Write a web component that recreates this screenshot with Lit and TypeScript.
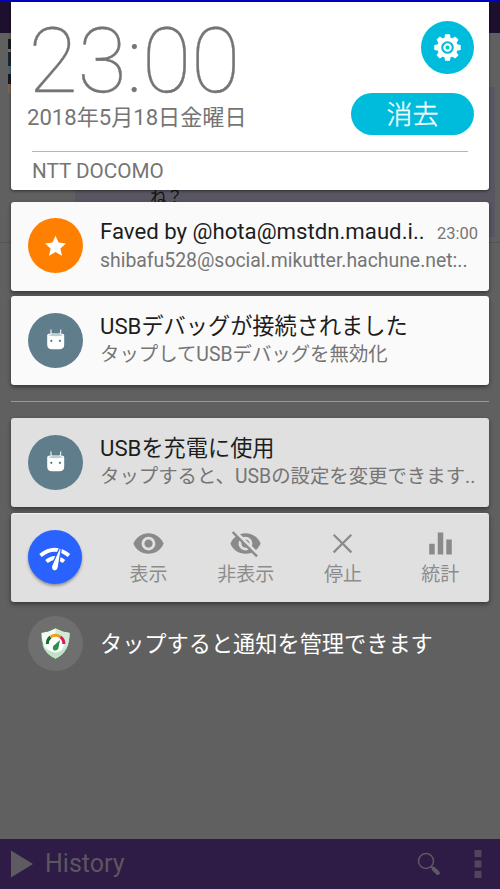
import { LitElement, html, css, svg, nothing } from "lit";
import { customElement, property } from "lit/decorators.js";

const star = svg`<svg width="55" height="55" viewBox="0.500 0.500 55 55"><path fill="#fff" d="M28 18.200l3.100 6.900 7.300.8-5.500 5 1.600 7.400-6.500-3.800-6.500 3.800 1.600-7.400-5.500-5 7.300-.8z"/></svg>`;

const android = svg`<svg width="55" height="55" viewBox="0 0 55 55">
  <path d="M22.800 16.500l.5 5M32.800 16.500l-.5 5" stroke="#dfe8ea" stroke-width="1.300"/>
  <path fill="#fff" d="M19.200 22.500q0-2 3-2h11q3 0 3 2v9q0 4.800-4.800 4.800h-7.400q-4.800 0-4.800-4.800z"/>
  <path fill="#b9cfd4" d="M19.800 22.300q8-3.500 16 0-8 1.800-16 0z"/>
  <circle cx="23.300" cy="27.800" r="1.100" fill="#546e7a"/><circle cx="31.900" cy="27.800" r="1.100" fill="#546e7a"/></svg>`;

const eyePath = "M12 4.500C7 4.500 2.730 7.610 1 12c1.730 4.390 6 7.500 11 7.500s9.270-3.110 11-7.500c-1.730-4.390-6-7.500-11-7.500zM12 17c-2.760 0-5-2.240-5-5s2.240-5 5-5 5 2.240 5 5-2.240 5-5 5zm0-8c-1.660 0-3 1.340-3 3s1.340 3 3 3 3-1.340 3-3-1.340-3-3-3z";
const eyeOffPath = "M12 7c2.760 0 5 2.240 5 5 0 .650-.130 1.260-.360 1.830l2.920 2.920c1.510-1.260 2.700-2.890 3.430-4.750-1.730-4.390-6-7.500-11-7.500-1.400 0-2.740.250-3.980.700l2.160 2.160C10.740 7.130 11.350 7 12 7zM2 4.270l2.280 2.280.46.46C3.080 8.300 1.780 10.020 1 12c1.730 4.390 6 7.500 11 7.500 1.550 0 3.030-.300 4.380-.840l.420.420L19.730 22 21 20.730 3.270 3 2 4.270zM7.530 9.800l1.550 1.550c-.050.210-.080.430-.080.650 0 1.660 1.340 3 3 3 .220 0 .440-.030.650-.080l1.550 1.550c-.670.330-1.410.530-2.200.530-2.760 0-5-2.240-5-5 0-.790.200-1.530.530-2.200zm4.310-.780l3.150 3.150.020-.160c0-1.660-1.340-3-3-3l-.170.010z";
const actions = [
  { label: "表示", path: eyePath },
  { label: "非表示", path: eyeOffPath },
  { label: "停止", path: "M19 6.140L17.860 5 12 10.860 6.140 5 5 6.140 10.860 12 5 17.860 6.140 19 12 13.140 17.860 19 19 17.860 13.140 12z" },
  { label: "統計", path: "M3.800 12.200h4V20h-4zM10 4h4v16h-4zM16.200 9h4V20h-4z" },
];

@customElement("notice-card")
class NoticeCard extends LitElement {
  @property() heading = "";
  @property() detail = "";
  @property() time = "";
  @property() tone = "";
  @property({ attribute: false }) icon: unknown = nothing;

  static styles = css`
    :host { display: block; }
    .card { display: flex; box-sizing: border-box; height: 89px; padding: 0 11px 0 17px; border-radius: 3px; background: #fafafa; box-shadow: 0 2px 4px rgba(0,0,0,.45); }
    .dim { background: #e0e0e0; }
    .badge { flex: none; width: 55px; height: 55px; margin-top: 16.500px; border-radius: 50%; background: #607d8b; }
    .orange { background: #ff8000; }
    .badge svg { display: block; }
    .copy { flex: 1; min-width: 0; margin-left: 17px; padding-top: 15px; white-space: nowrap; }
    .latin { padding-top: 14px; }
    .top { display: flex; justify-content: space-between; align-items: baseline; height: 30px; line-height: 30px; }
    .title { font-size: 22.200px; color: #1d1d1d; }
    .time { font-size: 16.500px; color: #757575; }
    .detail { height: 26px; line-height: 28px; font-size: 19.400px; color: #757575; }
    .latin .detail { line-height: 29px; }
  `;

  render() {
    return html`<section class="card ${this.tone}">
      <div class="badge ${this.time ? "orange" : ""}">${this.icon}</div>
      <div class="copy ${this.time ? "latin" : ""}">
        <div class="top"><span class="title">${this.heading}</span><span class="time">${this.time}</span></div>
        <div class="detail">${this.detail}</div>
      </div>
    </section>`;
  }
}

@customElement("app-root")
class AppRoot extends LitElement {
  static styles = css`
    :host { display: block; position: relative; width: 500px; height: 889px; overflow: hidden; background: #606060; font-family: Roboto, "Noto Sans CJK JP", sans-serif; }
    .behind { display: flex; flex-direction: column; height: 889px; }
    .status { height: 33px; background: #1d102e; flex: none; }
    .feed { flex: 1; position: relative; }
    .avatar { position: absolute; left: 8px; top: 6px; width: 8px; height: 54px; background: linear-gradient(#17191d 0 18%, #7a7064 18% 24%, #1b2630 24% 50%, #506472 50% 64%, #17191f 64% 84%, #7e6557 84%); }
    .post { position: absolute; left: 75px; top: 54px; width: 420px; height: 150px; background: #5a5661; box-sizing: border-box; padding: 98px 0 0 75px; font-size: 16.500px; line-height: 26px; color: #111; }
    .rule { position: absolute; left: 0; right: 0; top: 209px; height: 1px; background: #545454; }
    .bar { flex: none; display: flex; align-items: center; height: 50px; background: #2e1b46; color: #5d5661; }
    .history { font-size: 25px; line-height: 30px; margin: 0 auto 0 12px; }
    .play { margin-left: 11px; }
    .glass { margin-right: 33px; }
    .dots { margin-right: 18.500px; }
    .shade { position: absolute; inset: 0; box-sizing: border-box; padding: 0 11px; border-top: 2px solid #0000c0; display: flex; flex-direction: column; }
    .header { height: 188px; flex: none; background: #fff; border-radius: 0 0 3px 3px; color: #757575; box-shadow: 0 1px 3px rgba(0,0,0,.5); box-sizing: border-box; padding: 0 16px; }
    .hero { display: flex; justify-content: space-between; height: 149px; }
    .clock { font-size: 90px; font-weight: 100; line-height: 84px; height: 84px; margin-top: 18px; padding-left: 1.500px; letter-spacing: -.3px; -webkit-text-stroke: .3px #757575; }
    .date { font-size: 22.100px; line-height: 28px; margin-top: -1px; white-space: nowrap; }
    .controls { display: flex; flex-direction: column; align-items: flex-end; }
    .gear { width: 53px; height: 53px; border-radius: 50%; background: #00bcdc; margin-top: 19px; margin-right: -1px; }
    .clear { width: 123px; height: 42px; margin-top: 18.500px; margin-right: -1px; border-radius: 21px; background: #00bcdc; color: #fff; font-size: 26px; font-weight: 300; -webkit-text-stroke: .35px #fff; line-height: 45px; text-align: center; }
    .carrier { margin: 0 5px; border-top: 1px solid #b5b5b5; font-size: 20.700px; line-height: 36px; padding-top: 1px; }
    .stack { display: grid; gap: 5.500px; margin-top: 11.500px; flex: none; }
    .divider { height: 1px; flex: none; margin: 16px 0; background: #999; }
    .low { margin-top: 0; }
    .tools { display: flex; height: 89px; box-sizing: border-box; padding-left: 17px; border-radius: 3px; background: #e0e0e0; box-shadow: 0 2px 5px rgba(0,0,0,.45); border-top: 1px solid #f2f2f2; }
    .meter { flex: none; width: 54px; height: 54px; margin: 16px 18px 0 0; border-radius: 50%; background: #2962ff; box-shadow: 0 2px 3px rgba(0,0,0,.35); }
    .action { flex: none; width: 97.200px; display: flex; flex-direction: column; align-items: center; color: #8c8c8c; font-size: 19px; line-height: 30px; padding-top: 13px; box-sizing: border-box; }
    svg { display: block; }
    .manage { display: flex; align-items: center; padding-left: 17px; margin-top: 14px; color: #fff; font-size: 22.200px; line-height: 30px; }
    .manage-text { padding-top: 2px; }
    .shield { width: 55px; height: 55px; border-radius: 50%; background: #6f6f6f; margin-right: 17px; }
  `;

  render() {
    const teeth = [0, 45, 90, 135, 180, 225, 270, 315];
    return html`
      <div class="behind">
        <div class="status"></div>
        <div class="feed"><div class="avatar"></div><div class="post">ね？</div><div class="rule"></div></div>
        <div class="bar">
          <svg class="play" width="22" height="28" viewBox="0 0 22 28"><path d="M0 .5L22 14 0 27.500z" fill="#5d5b5f"/></svg>
          <span class="history">History</span>
          <svg class="glass" width="24" height="24" viewBox="0 0 24 24" fill="none" stroke="#5f5962"><circle cx="9" cy="9" r="7.500" stroke-width="1.500"/><path d="M14 14.300l3 3" stroke-width="2"/><path d="M16.800 17.100l4 3.800" stroke-width="4.200" stroke-linecap="round"/></svg>
          <svg class="dots" width="8" height="30" viewBox="0 0 8 30" fill="#514758"><path d="M.5 1h7v7h-7zM.5 11.500h7v7h-7zM.5 22h7v7h-7z"/></svg>
        </div>
      </div>
      <div class="shade">
        <header class="header">
          <div class="hero">
            <div><div class="clock">23:00</div><div class="date">2018年5月18日金曜日</div></div>
            <div class="controls">
              <div class="gear"><svg width="53" height="53" viewBox="-26.500 -26.500 53 53">
                ${teeth.map((a) => svg`<path transform="rotate(${a})" fill="#fff" d="M-3.200-9l.8-4.200h4.800l.8 4.200z"/>`)}
                <circle r="8.300" fill="none" stroke="#fff" stroke-width="4"/><circle r="3.100" fill="none" stroke="#fff" stroke-width="2.300"/></svg></div>
              <div class="clear">消去</div>
            </div>
          </div>
          <div class="carrier">NTT DOCOMO</div>
        </header>
        <div class="stack">
          <notice-card heading="Faved by @hota@mstdn.maud.i.." detail="shibafu528@social.mikutter.hachune.net:.." time="23:00" .icon=${star}></notice-card>
          <notice-card heading="USBデバッグが接続されました" detail="タップしてUSBデバッグを無効化" .icon=${android}></notice-card>
        </div>
        <div class="divider"></div>
        <div class="stack low">
          <notice-card tone="dim" heading="USBを充電に使用" detail="タップすると、USBの設定を変更できます.." .icon=${android}></notice-card>
          <div class="tools">
            <div class="meter"><svg width="54" height="54" viewBox="0 0 54 54" fill="none" stroke="#fff">
              <path d="M12.500 25.500Q26.500 14 41 25.500" stroke-width="4"/><path d="M18.500 31.500Q27 24.500 36 31.500" stroke-width="4"/>
              <path d="M31.500 18L23.500 36q-.5 4.500 2.500 5 3.500.5 4.300-3.500l3-19z" fill="#fff" stroke="#2962ff" stroke-width="1.300"/></svg></div>
            ${actions.map((a) => html`<div class="action"><svg width="33" height="33" viewBox="0 0 24 24" fill="#8a8a8a"><path d=${a.path} /></svg><span>${a.label}</span></div>`)}
          </div>
        </div>
        <div class="manage">
          <div class="shield"><svg width="55" height="55" viewBox="0 0 55 55">
            <path d="M27.500 12Q35 16 42 16.500C42 29 38 38 27.500 43 17 38 13 29 13 16.500Q20 16 27.500 12z" fill="#f4faf4" stroke="#4d8257" stroke-width=".8"/>
            <path d="M27.500 12.500Q35 16.500 41.500 17C41.500 29 37.500 38 27.500 42.500z" fill="#d3e8d6"/>
            <path d="M14 28Q17 38 27.500 42.500 37 38 40.500 28 35 36 27.500 36 19 36 14 28z" fill="#c2e2c8"/>
            <circle cx="27.500" cy="28" r="8.500" fill="#fff"/>
            <g fill="none" stroke-width="3"><path d="M19.300 28Q19.300 23.500 22.500 21" stroke="#176b35"/><path d="M22.500 21Q27.500 17.500 32.500 21" stroke="#f0a020"/><path d="M32.500 21Q36 23.500 35.800 28" stroke="#d81b60"/></g>
            <path d="M32 24l-1.700 8.500q-1 2.500-4 2-2.500-1.500-1-4.500z" fill="#279447"/></svg></div>
          <span class="manage-text">タップすると通知を管理できます</span>
        </div>
      </div>`;
  }
}
